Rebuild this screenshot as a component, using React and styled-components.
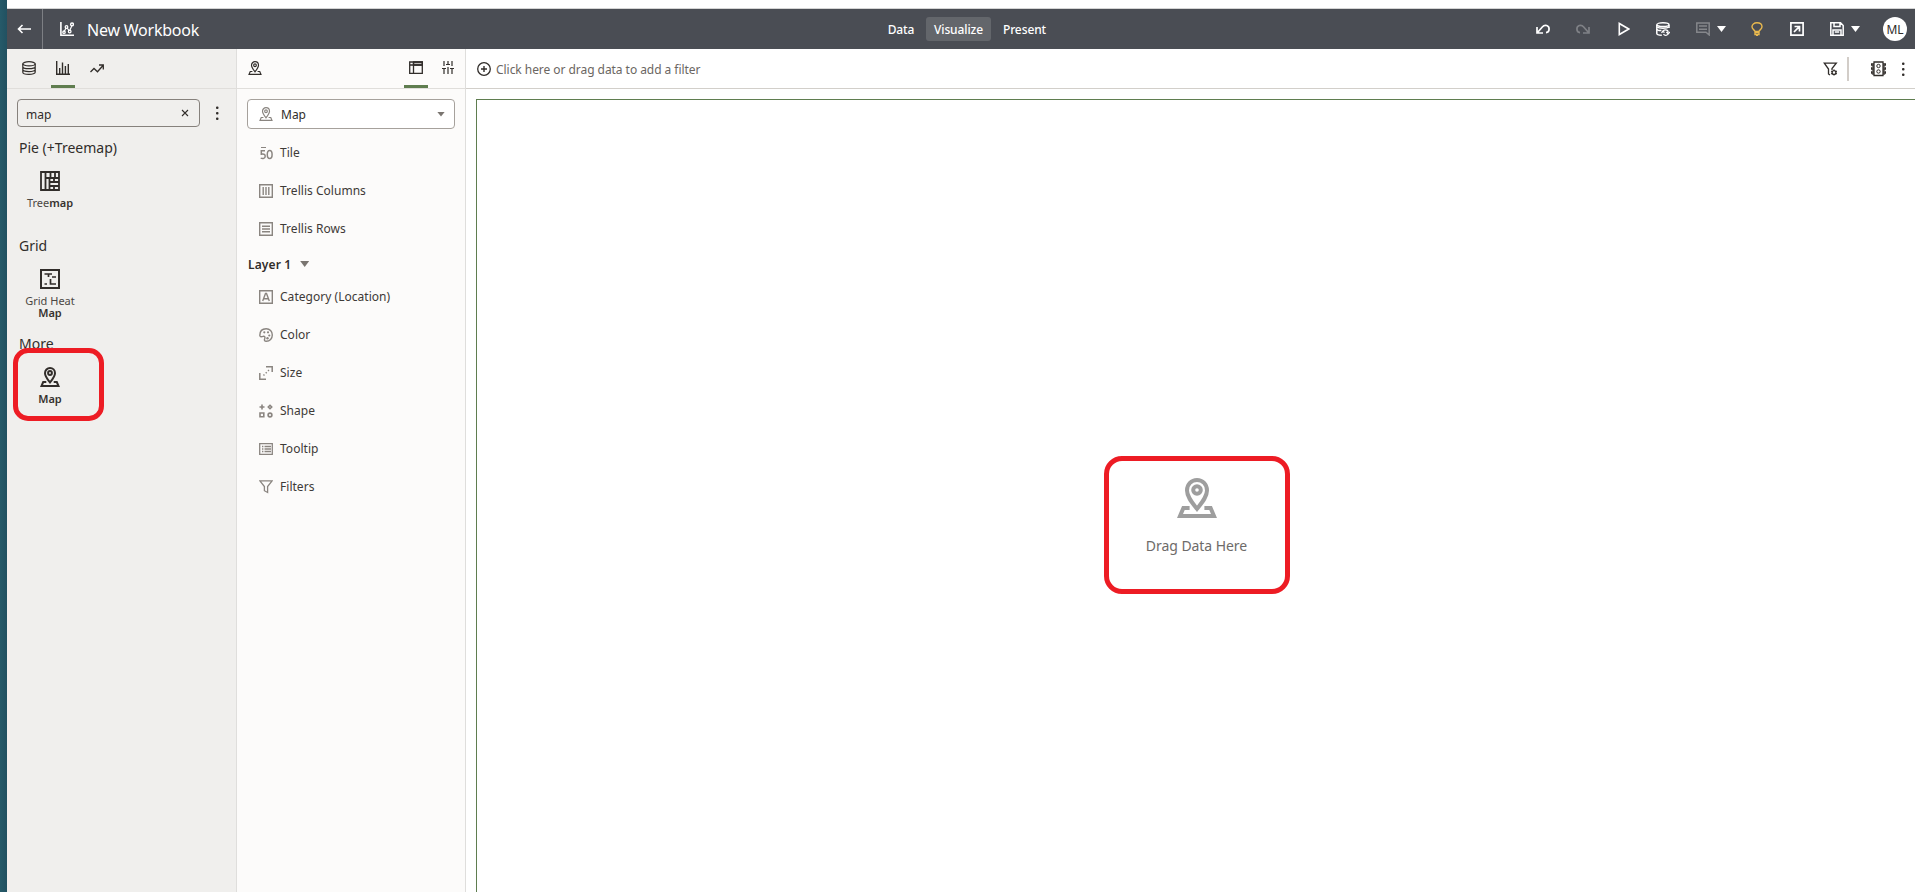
import React from "react";
import styled, { createGlobalStyle, css } from "styled-components";

const Global = createGlobalStyle`
  * { box-sizing: border-box; }
  html, body { margin: 0; height: 100%; overflow: hidden; }
  body {
    font-family: "Noto Sans", "Open Sans", sans-serif;
    font-size: 12px;
    color: #312d2a;
    background: #fff;
  }
  svg { display: block; flex: none; }
`;

/* ---------- frame ---------- */
const Screen = styled.div`
  display: flex;
  width: 100%;
  height: 100vh;
  overflow: hidden;
`;
const Wallpaper = styled.div`
  flex: none;
  width: 7px;
  background: linear-gradient(90deg, #265a69, #215161);
`;
const Window = styled.div`
  flex: 1;
  min-width: 0;
  display: flex;
  flex-direction: column;
  padding-top: 8px;
`;
const Body = styled.div`
  flex: 1;
  min-height: 0;
  display: flex;
`;

/* ---------- header ---------- */
const Header = styled.header`
  flex: none;
  height: 41px;
  border-top: 1px solid #d4d4d4;
  background: #4a4d54;
  display: grid;
  grid-template-columns: 869px 182px 1fr;
  align-items: center;
  color: #fff;
`;
const HeaderLeft = styled.div`
  display: flex;
  align-items: center;
  height: 40px;
`;
const BackButton = styled.div`
  width: 36px;
  height: 40px;
  padding-left: 10px;
  display: flex;
  align-items: center;
  border-right: 1px solid #7d7f84;
  margin-right: 17px;
`;
const Title = styled.h1`
  margin: 2px 0 0 13px;
  font-size: 16px;
  font-weight: 400;
  line-height: 20px;
  letter-spacing: -0.22px;
  white-space: nowrap;
`;
const ModeTabs = styled.nav`
  display: flex;
  align-items: center;
  white-space: nowrap;
`;
const ModeTab = styled.div`
  flex: none;
  width: ${(p) => p.$w}px;
  height: 24px;
  line-height: 25px;
  text-align: center;
  border-radius: 3px;
  font-weight: 500;
  letter-spacing: -0.1px;
  background: ${(p) => (p.$active ? "#63666b" : "transparent")};
`;
const HeaderTools = styled.div`
  display: flex;
  align-items: center;
  justify-content: flex-end;
  padding-right: 8px;
`;
const Tool = styled.div`
  display: flex;
  align-items: center;
  gap: 7px;
  margin-right: ${(p) => p.$gap}px;
  color: ${(p) => p.$color || "#fff"};
`;
const Caret = styled.span`
  flex: none;
  width: ${(p) => p.$w}px;
  height: ${(p) => p.$h}px;
  background: ${(p) => p.$color};
  clip-path: polygon(0 0, 100% 0, 50% 100%);
`;
const Avatar = styled.div`
  width: 24px;
  height: 24px;
  border-radius: 50%;
  background: #fff;
  color: #312d2a;
  text-align: center;
  line-height: 25px;
  letter-spacing: -0.2px;
`;

/* ---------- side panels ---------- */
const Panel = styled.aside`
  flex: none;
  width: ${(p) => p.$w}px;
  background: ${(p) => p.$bg};
  border-right: 1px solid #dfdedc;
`;
const PanelTabs = styled.div`
  display: flex;
  height: 40px;
  border-bottom: 1px solid #e0dedb;
  padding-left: ${(p) => p.$left}px;
`;
const PanelTab = styled.div`
  width: 24px;
  margin-right: ${(p) => p.$gap || 0}px;
  height: 39px;
  display: flex;
  justify-content: center;
  padding-top: ${(p) => p.$top || 12}px;
  ${(p) => p.$active && css`border-bottom: 3px solid #5f7d4f;`}
`;
const SearchRow = styled.div`
  display: flex;
  align-items: center;
  padding: 10px 0 0 10px;
`;
const SearchBox = styled.div`
  width: 183px;
  height: 28px;
  border: 1px solid #86817c;
  border-radius: 4px;
  display: flex;
  align-items: center;
  justify-content: space-between;
  padding: 0 10px 0 8px;
  margin-right: 16px;
  span { padding-top: 2px; }
`;
const Group = styled.section`
  height: 98px;
  padding: 11px 0 0 12px;
`;
const GroupTitle = styled.h2`
  margin: 0;
  font-size: 14px;
  font-weight: 400;
  line-height: 19px;
`;
const VizItem = styled.div`
  width: 62px;
  margin-top: 14px;
  display: flex;
  flex-direction: column;
  align-items: center;
  text-align: center;
`;
const VizLabel = styled.div`
  margin-top: 6px;
  font-size: 11px;
  line-height: 12px;
  color: #4b4743;
  b { font-weight: 600; color: #36322f; }
`;

const VizSelect = styled.div`
  margin: 10px 0 5px 10px;
  width: 208px;
  height: 30px;
  border: 1px solid #a6a19c;
  border-radius: 4px;
  background: #fff;
  display: flex;
  align-items: center;
  padding: 0 9px 0 11px;
  color: #8a8580;
`;
const SelectText = styled.span`
  flex: 1;
  margin-left: 8px;
  color: #312d2a;
`;
const Edge = styled.div`
  height: 38px;
  padding-left: 22px;
  display: flex;
  align-items: center;
  gap: 7px;
  color: #8a8580;
`;
const EdgeText = styled.span`
  padding-bottom: 2px;
  color: #3e3a37;
  letter-spacing: 0.03px;
`;
const LayerTitle = styled.div`
  height: 30px;
  padding: 2px 0 0 11px;
  display: flex;
  align-items: center;
  gap: 9px;
  font-weight: 600;
  letter-spacing: 0.12px;
`;

/* ---------- canvas ---------- */
const Main = styled.main`
  flex: 1;
  min-width: 0;
  display: flex;
  flex-direction: column;
  background: #fff;
`;
const FilterBar = styled.div`
  flex: none;
  height: 40px;
  border-bottom: 1px solid #d2cfca;
  display: flex;
  align-items: center;
  padding: 0 10px 0 11px;
`;
const FilterHint = styled.span`
  flex: 1;
  margin-left: 5px;
  padding-top: 2px;
  color: #6b6662;
  letter-spacing: -0.05px;
`;
const Separator = styled.span`
  width: 2px;
  height: 24px;
  background: #d2cdc8;
  margin: 0 22px 0 9px;
`;
const MenuButton = styled.div`
  margin-left: 16px;
`;
const DropZone = styled.div`
  flex: 1;
  margin: 10px 0 0 10px;
  border: solid #5f7d4f;
  border-width: 1px 0 0 1px;
  display: flex;
  flex-direction: column;
  align-items: center;
  padding: 378px 0 0 1px;
  color: #9e9e9e;
`;
const DropText = styled.div`
  margin-top: 18px;
  font-size: 14px;
  line-height: 19px;
  letter-spacing: -0.06px;
  color: #6e6b69;
`;
const Highlight = styled.div`
  position: absolute;
  left: ${(p) => p.$x}px;
  top: ${(p) => p.$y}px;
  width: ${(p) => p.$w}px;
  height: ${(p) => p.$h}px;
  border: 5px solid #ed1c24;
  border-radius: ${(p) => p.$r}px;
`;

/* ---------- icons ---------- */
const Svg = ({ w = 14, h = w, vw = w, vh = h, sw = 1.2, children }) => (
  <svg width={w} height={h} viewBox={`0 0 ${vw} ${vh}`} fill="none" stroke="currentColor" strokeWidth={sw}>
    {children}
  </svg>
);
const BackIcon = () => (
  <Svg sw={1.6}><path d="M14 7H1.5M5.5 3L1.5 7l4 4" /></Svg>
);
const WorkbookIcon = () => (
  <Svg sw={1.6}>
    <path d="M.9 0v13.200H14" />
    <path d="M4.200 9.500L6 6M7.200 6l2 3M10 8l1.700-4" strokeWidth="1.200" />
    <circle cx="6.500" cy="5" r="1.300" strokeWidth="1.300" /><circle cx="4" cy="10.200" r="1.200" strokeWidth="1.300" />
    <circle cx="9.700" cy="9.500" r="1.300" strokeWidth="1.300" /><circle cx="12" cy="2.400" r="1.400" strokeWidth="1.400" />
  </Svg>
);
const UndoIcon = () => (
  <Svg sw={1.700}><path d="M1 5v6h6M1.500 10.500L6.300 5C9 1.800 13.100 3.700 13.100 7c0 2-1.100 3.400-3.100 3.600" /></Svg>
);
const RedoIcon = () => (
  <Svg sw={1.700}><path d="M13 5v6H7M12.500 10.500L7.700 5C5 1.800.9 3.700.9 7c0 2 1.100 3.400 3.100 3.600" /></Svg>
);
const PlayIcon = () => (
  <Svg w={12} h={14} sw={1.600}><path d="M1.300 1.500v11L10.800 7z" /></Svg>
);
const RefreshDataIcon = () => (
  <Svg sw={1.500}>
    <path d="M.8 3v8.500c0 1 2.200 1.700 5 1.700M13 6V3" />
    <ellipse cx="6.900" cy="2.700" rx="6.100" ry="1.900" />
    <path d="M.8 7c0 1 2 1.600 4.600 1.600M1 5c2 1.600 10 1.600 12 0" />
    <path d="M6.600 10.500c0-3.600 5.600-3.600 5.600 0M10.300 10l2 1.800L14 10M8.500 10.500L6.800 9.200 5.500 11M7.500 12c1 1.800 3.400 1.800 4.300.3" strokeWidth="1.200" />
  </Svg>
);
const CommentIcon = () => (
  <Svg sw={1.500}><path d="M.8 1h12.400v12L10 10.300H.8zM3 4h8M3 7.200h8" /></Svg>
);
const BulbIcon = () => (
  <Svg w={12} h={14} sw={1.400}>
    <path d="M4 9.500C4 8 1 7.500 1 4.800 1 2.500 3 .8 6 .8s5 1.700 5 4C11 7.500 8 8 8 9.500zM4 10.500h4v2H4z" />
    <path d="M5 13.300h2" />
  </Svg>
);
const ExportIcon = () => (
  <Svg sw={1.700}><path d="M.9.9h12.200v12.200H.9zM4.500 4.500h5v5M9.300 4.700l-5.300 5.300" /></Svg>
);
const SaveIcon = () => (
  <Svg sw={1.500}><path d="M.8.8h9.700l2.700 2.700v9.700H.8zM4 1v3.500h6V1M3 13V8h8v5M4.800 10h4.400" /></Svg>
);
const DataIcon = () => (
  <Svg sw={1.200}>
    <ellipse cx="7" cy="2.800" rx="6.200" ry="2.100" />
    <path d="M.8 2.800v8.500c0 1.200 2.700 2.100 6.200 2.100s6.200-.9 6.200-2.100V2.800M.8 5.700c0 1.200 2.700 2 6.200 2s6.200-.8 6.200-2M.8 8.600c0 1.200 2.700 2 6.200 2s6.200-.8 6.200-2" />
  </Svg>
);
const BarsIcon = () => (
  <Svg sw={1.400}><path d="M.7 0v13.300H14M3.700 12.500V7M6.500 12.500V1.500M9.400 12.500V5M12.300 12.500V3" /></Svg>
);
const TrendIcon = () => (
  <Svg w={14} h={10} sw={1.300}><path d="M.5 8L4 4.500l3.500 3.300L13 1.500M9 1h4.300v4.500" /></Svg>
);
const DotsIcon = () => (
  <svg width="3" height="14" viewBox="0 0 3 14" fill="#312d2a">
    <rect y="0.500" width="2.500" height="2.500" rx="1" /><rect y="6" width="2.500" height="2.500" rx="1" /><rect y="11.500" width="2.500" height="2.500" rx="1" />
  </svg>
);
const CloseIcon = () => (
  <Svg w={8} sw={1.100}><path d="M1 1l6 6M7 1L1 7" /></Svg>
);
const TreemapIcon = () => (
  <Svg w={20} sw={1.800}>
    <path d="M1 1h18v18H1zM5.500 1v18M9.500 7v12M5.500 7H19M9.500 11H19M9.500 15H19M10.500 1v6M15 1v6M14 7v4M14 15v4" />
  </Svg>
);
const HeatmapIcon = () => (
  <Svg w={20} sw={2}>
    <path d="M1 1h18v18H1z" />
    <path d="M4.500 5H12M8.500 5v3M12 8h4M4.500 15H7M10.500 10v5.800M10 15h6" strokeWidth="1.700" />
  </Svg>
);
const MapIcon = ({ size = 14, sw = 2 }) => (
  <Svg w={size} vw={20} vh={20} sw={sw}>
    <path d="M10 15.400C7.300 12 5 9.300 5 6.200 5 3.200 7.200 1 10 1s5 2.200 5 5.200c0 3.100-2.300 5.800-5 9.200z" />
    <circle cx="10" cy="6" r="1.900" />
    <path d="M6.300 15H3.200L1.500 19h17l-1.700-4h-3.100" />
  </Svg>
);
const LayoutIcon = () => (
  <Svg h={13} sw={1.300}>
    <path d="M4.500 1h8.800v3H4.500z" fill="#bdbab7" />
    <path d="M.7 1h12.600v11.300H.7zM4.500 1v11.300M.7 4h12.600" />
  </Svg>
);
const SlidersIcon = () => (
  <Svg w={12} h={13} sw={1.200}>
    <path d="M2 0v5M2 8v5M6 0v3M6 6v7M10 0v5M10 8v5M0 7.500h4M4 3.500h4M8 7.500h4" />
  </Svg>
);
const TileIcon = () => (
  <Svg sw={1.500}>
    <path d="M2 1.500h5" strokeWidth="1" />
    <path d="M6 4.800H2.300v3.400c3-.6 3.900.5 3.900 2 0 2.400-2.500 2.700-4.500 1.900M8.300 8.500c0-5.300 4.800-5.300 4.800 0s-4.800 5.300-4.800 0z" />
  </Svg>
);
const TrellisColumnsIcon = () => (
  <Svg sw={1.400}><path d="M.7.700h12.600v12.600H.7zM4.200 3v8M7 3v8M9.800 3v8" /></Svg>
);
const TrellisRowsIcon = () => (
  <Svg sw={1.400}><path d="M.7.700h12.600v12.600H.7zM3 4.200h8M3 7h8M3 9.800h8" /></Svg>
);
const CategoryIcon = () => (
  <Svg sw={1.400}><path d="M.7.700h12.600v12.600H.7zM3.700 11L6.500 3.500h1L10.300 11M4.500 8.700h5" /></Svg>
);
const PaletteIcon = () => (
  <Svg sw={1.400}>
    <path d="M.8 7.500C.8 3.200 3.500.8 7.200.8c3.600 0 6.100 2.700 6.100 6.200s-2.500 6.300-6 6.300c-2 0-2.200-1.300-1.600-2.600.8-1.600-.2-2.700-1.600-2.300C2.500 8.900 1 9 .8 7.500z" />
    <g fill="currentColor" stroke="none">
      <circle cx="5.300" cy="4.300" r="1.100" /><circle cx="9" cy="4.300" r="1.100" /><circle cx="10.300" cy="7.500" r="1.100" /><circle cx="8.500" cy="10.300" r="1.200" />
    </g>
  </Svg>
);
const SizeIcon = () => (
  <Svg sw={1.500}>
    <path d="M7 .8h6.200V6M.8 7v6.200H7" />
    <path d="M4.500 9.500l6-6" strokeDasharray="1.300 1.900" />
  </Svg>
);
const ShapeIcon = () => (
  <Svg sw={1.600}>
    <path d="M3 .5v5M.5 3h5M1 9h3.800v3.800H1z" />
    <circle cx="11" cy="11" r="1.900" />
    <path d="M11 1.300L12.700 3 11 4.700 9.300 3z" />
  </Svg>
);
const TooltipIcon = () => (
  <Svg h={12} sw={1.300}><path d="M.7.700h12.600v10.600H.7zM5.500 3.500H12M5.500 6H12M5.500 8.500H12M3 3.500h1.400M3 6h1.400M3 8.500h1.400" /></Svg>
);
const FunnelIcon = () => (
  <Svg sw={1.300}><path d="M.9.8h12.200L8.600 6.500v6L5.400 10.700V6.500z" /></Svg>
);
const AddIcon = () => (
  <Svg sw={1.300}><circle cx="7" cy="7" r="6.300" /><path d="M7 4v6M4 7h6" strokeWidth="1.400" /></Svg>
);
const FilterSettingsIcon = () => (
  <Svg w={15} h={14} sw={1.300}>
    <path d="M7 13l-1.500-1V7L1.300 1.200h12L9 6.600V8" /><circle cx="11" cy="10.500" r="1.900" />
    <path d="M11 7.500v1M11 12.500v1M13.800 9l-1 .6M8.200 12l1-.6M8.200 9l1 .6M13.800 12l-1-.6" />
  </Svg>
);
const TrafficIcon = () => (
  <Svg w={15} h={16} sw={1.300}>
    <path d="M3 1h9v13.500H3zM3 3H.5c0 1.500.8 2.300 2.500 2.300M3 7H.5c0 1.500.8 2.300 2.500 2.300M3 11H.5c0 1.500.8 2.300 2.500 2.300M12 3h2.500c0 1.500-.8 2.300-2.500 2.300M12 7h2.500c0 1.500-.8 2.300-2.500 2.300M12 11h2.500c0 1.500-.8 2.300-2.500 2.300" />
    <circle cx="7.500" cy="5" r="1.700" strokeWidth="1" /><circle cx="7.500" cy="10.500" r="1.700" strokeWidth="1" />
  </Svg>
);

const placements = [
  ["Tile", TileIcon],
  ["Trellis Columns", TrellisColumnsIcon],
  ["Trellis Rows", TrellisRowsIcon],
];
const layerEdges = [
  ["Category (Location)", CategoryIcon],
  ["Color", PaletteIcon],
  ["Size", SizeIcon],
  ["Shape", ShapeIcon],
  ["Tooltip", TooltipIcon],
  ["Filters", FunnelIcon],
];
const EdgeRow = ({ item: [label, Icon] }) => (
  <Edge><Icon /><EdgeText>{label}</EdgeText></Edge>
);

export default function App() {
  return (
    <>
      <Global />
      <Screen>
        <Wallpaper />
        <Window>
          <Header>
            <HeaderLeft>
              <BackButton><BackIcon /></BackButton>
              <WorkbookIcon />
              <Title>New Workbook</Title>
            </HeaderLeft>
            <ModeTabs>
              <ModeTab $w={50}>Data</ModeTab>
              <ModeTab $w={65} $active>Visualize</ModeTab>
              <ModeTab $w={67}>Present</ModeTab>
            </ModeTabs>
            <HeaderTools>
              <Tool $gap={26}><UndoIcon /></Tool>
              <Tool $gap={28} $color="#7f8186"><RedoIcon /></Tool>
              <Tool $gap={26}><PlayIcon /></Tool>
              <Tool $gap={26}><RefreshDataIcon /></Tool>
              <Tool $gap={25} $color="#85878b"><CommentIcon /><Caret $w={9} $h={6} $color="#fff" /></Tool>
              <Tool $gap={27} $color="#e9b94e"><BulbIcon /></Tool>
              <Tool $gap={26}><ExportIcon /></Tool>
              <Tool $gap={23}><SaveIcon /><Caret $w={9} $h={6} $color="#fff" /></Tool>
              <Avatar>ML</Avatar>
            </HeaderTools>
          </Header>
          <Body>
            <Panel $w={230} $bg="#f0efed">
              <PanelTabs $left={10}>
                <PanelTab $gap={10}><DataIcon /></PanelTab>
                <PanelTab $gap={10} $active><BarsIcon /></PanelTab>
                <PanelTab $top={15}><TrendIcon /></PanelTab>
              </PanelTabs>
              <SearchRow>
                <SearchBox><span>map</span><CloseIcon /></SearchBox>
                <DotsIcon />
              </SearchRow>
              <Group>
                <GroupTitle>Pie (+Treemap)</GroupTitle>
                <VizItem><TreemapIcon /><VizLabel>Tree<b>map</b></VizLabel></VizItem>
              </Group>
              <Group>
                <GroupTitle>Grid</GroupTitle>
                <VizItem><HeatmapIcon /><VizLabel>Grid Heat<br /><b>Map</b></VizLabel></VizItem>
              </Group>
              <Group>
                <GroupTitle>More</GroupTitle>
                <VizItem><MapIcon size={20} /><VizLabel><b>Map</b></VizLabel></VizItem>
              </Group>
            </Panel>
            <Panel $w={229} $bg="#fcfbfa">
              <PanelTabs $left={6}>
                <PanelTab $gap={137}><MapIcon sw={1.700} /></PanelTab>
                <PanelTab $gap={8} $active><LayoutIcon /></PanelTab>
                <PanelTab><SlidersIcon /></PanelTab>
              </PanelTabs>
              <VizSelect>
                <MapIcon sw={1.700} />
                <SelectText>Map</SelectText>
                <Caret $w={8} $h={5} $color="#7a7570" />
              </VizSelect>
              {placements.map((item) => <EdgeRow key={item[0]} item={item} />)}
              <LayerTitle>Layer 1<Caret $w={9} $h={6} $color="#7a7570" /></LayerTitle>
              {layerEdges.map((item) => <EdgeRow key={item[0]} item={item} />)}
            </Panel>
            <Main>
              <FilterBar>
                <AddIcon />
                <FilterHint>Click here or drag data to add a filter</FilterHint>
                <FilterSettingsIcon />
                <Separator />
                <TrafficIcon />
                <MenuButton><DotsIcon /></MenuButton>
              </FilterBar>
              <DropZone>
                <MapIcon size={40} />
                <DropText>Drag Data Here</DropText>
              </DropZone>
            </Main>
          </Body>
        </Window>
      </Screen>
      <Highlight $x={13} $y={348} $w={91} $h={73} $r={15} />
      <Highlight $x={1104} $y={456} $w={186} $h={138} $r={18} />
    </>
  );
}
